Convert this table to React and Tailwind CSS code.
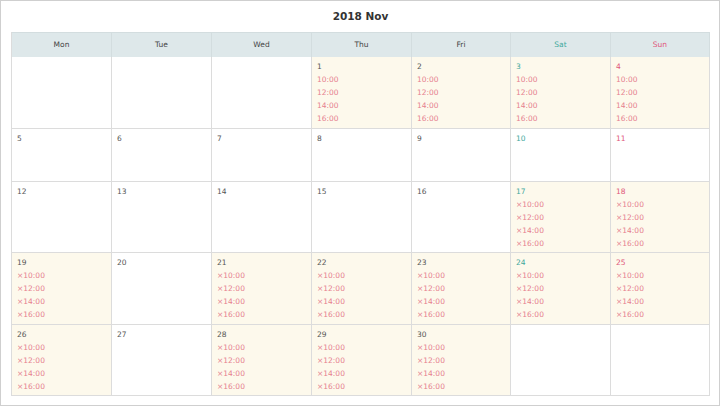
import React from "react";

const days = [
  { label: "Mon", color: "text-[#555]" },
  { label: "Tue", color: "text-[#555]" },
  { label: "Wed", color: "text-[#555]" },
  { label: "Thu", color: "text-[#555]" },
  { label: "Fri", color: "text-[#555]" },
  { label: "Sat", color: "text-[#3fa89d]" },
  { label: "Sun", color: "text-[#e0577a]" },
];

const slots = ["10:00", "12:00", "14:00", "16:00"];

// null = empty cell, mark: "open" | "full" | none
const weeks = [
  [null, null, null, { d: 1, m: "open" }, { d: 2, m: "open" }, { d: 3, m: "open" }, { d: 4, m: "open" }],
  [{ d: 5 }, { d: 6 }, { d: 7 }, { d: 8 }, { d: 9 }, { d: 10 }, { d: 11 }],
  [{ d: 12 }, { d: 13 }, { d: 14 }, { d: 15 }, { d: 16 }, { d: 17, m: "full" }, { d: 18, m: "full" }],
  [{ d: 19, m: "full" }, { d: 20 }, { d: 21, m: "full" }, { d: 22, m: "full" }, { d: 23, m: "full" }, { d: 24, m: "full" }, { d: 25, m: "full" }],
  [{ d: 26, m: "full" }, { d: 27 }, { d: 28, m: "full" }, { d: 29, m: "full" }, { d: 30, m: "full" }, null, null],
];

function Cell({ cell, col }) {
  const hasSlots = cell && cell.m;
  return (
    <div
      className={`border-r border-b border-[#dcdcdc] pl-[5px] pt-[3px] pb-[2.5px] min-h-[53px] leading-[13px] text-[7.5px] ${
        hasSlots ? "bg-[#fdf9ec]" : "bg-white"
      }`}
    >
      {cell && (
        <>
          <div className={days[col].color}>{cell.d}</div>
          {hasSlots &&
            slots.map((t) => (
              <div key={t} className="text-[#e6808f]">
                {cell.m === "full" ? "×" : ""}
                {t}
              </div>
            ))}
        </>
      )}
    </div>
  );
}

export default function App() {
  return (
    <div
      className="w-[720px] h-[406px] border border-[#cfcfcf] bg-white flex flex-col pl-[10px] pr-[9px] pb-[9px]"
      style={{ fontFamily: '"DejaVu Sans", Verdana, sans-serif' }}
    >
      <div className="h-[31px] shrink-0 flex items-center justify-center text-[10.5px] font-bold text-[#333]">
        2018 Nov
      </div>
      <div className="flex-1 overflow-hidden">
        <div className="grid grid-cols-[100px_100px_100px_100px_99px_100px_99px] border-l border-[#dcdcdc]">
          {days.map((d) => (
            <div
              key={d.label}
              className={`h-[25px] flex items-center justify-center bg-[#dee8ea] border-r border-t border-[#d3dddf] text-[7.5px] ${d.color === "text-[#555]" ? "text-[#444]" : d.color}`}
            >
              {d.label}
            </div>
          ))}
          {weeks.map((w, wi) =>
            w.map((cell, ci) => <Cell key={`${wi}-${ci}`} cell={cell} col={ci} />)
          )}
        </div>
      </div>
    </div>
  );
}
